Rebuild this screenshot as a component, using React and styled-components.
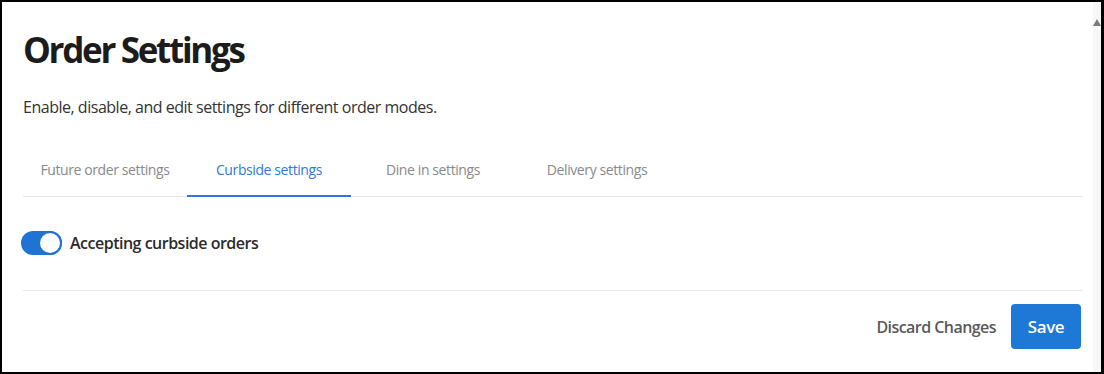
import React, { useState } from 'react'
import styled, { createGlobalStyle } from 'styled-components'

const GlobalStyle = createGlobalStyle`
  html, body {
    margin: 0;
    padding: 0;
    background: #fff;
  }
  body {
    font-family: 'Open Sans', 'Noto Sans', sans-serif;
    color: #222;
  }
`

const Frame = styled.div`
  display: flex;
  width: 1104px;
  height: 374px;
  box-sizing: border-box;
  border: 2px solid #000;
  border-right-width: 3px;
  overflow: hidden;
`

const Page = styled.main`
  flex: 1;
  display: flex;
  flex-direction: column;
  padding: 0 10px 0 21px;
`

const Scrollbar = styled.div`
  width: 8px;
  background: #f7f7f7;
  display: flex;
  justify-content: center;
  padding-top: 17px;
  box-sizing: border-box;
`

const ScrollArrow = styled.div`
  width: 0;
  height: 0;
  border-left: 4px solid transparent;
  border-right: 4px solid transparent;
  border-bottom: 7px solid #7a7a7a;
`

const Title = styled.h1`
  margin: 24px 0 0;
  font-size: 35px;
  line-height: 48px;
  font-weight: 700;
  color: #1c1c1c;
  letter-spacing: -2.3px;
`

const Subtitle = styled.p`
  margin: 22px 0 0;
  font-size: 16px;
  line-height: 22px;
  letter-spacing: -0.48px;
  color: #333;
`

const Tabs = styled.nav`
  display: flex;
  margin-top: 37px;
  border-bottom: 1px solid #e6e6e6;
`

const Tab = styled.button`
  width: 164px;
  height: 42px;
  padding: 0 0 12px;
  border: none;
  background: none;
  font-family: inherit;
  font-size: 14px;
  letter-spacing: -0.4px;
  color: ${p => (p.active ? '#2f7ad6' : '#8a8a8a')};
  border-bottom: 2px solid ${p => (p.active ? '#2f7ad6' : 'transparent')};
  margin-bottom: -1px;
  cursor: pointer;
`

const ToggleRow = styled.label`
  display: flex;
  align-items: center;
  gap: 8px;
  margin: 34px 0 0 -2px;
  font-size: 16px;
  font-weight: 600;
  letter-spacing: -0.5px;
  color: #2b2b2b;
`

const Switch = styled.span`
  position: relative;
  width: 41px;
  height: 24px;
  border-radius: 12px;
  background: ${p => (p.on ? '#1f73d2' : '#bbb')};
  flex-shrink: 0;

  &::after {
    content: '';
    position: absolute;
    top: 0;
    left: ${p => (p.on ? '17px' : '0')};
    width: 24px;
    height: 24px;
    box-sizing: border-box;
    border-radius: 50%;
    border: 2px solid ${p => (p.on ? '#1f73d2' : '#bbb')};
    background: #fff;
  }
`

const Divider = styled.hr`
  margin: 35px 0 0;
  border: none;
  border-top: 1px solid #e8e8e8;
`

const Footer = styled.footer`
  display: flex;
  justify-content: flex-end;
  align-items: center;
  gap: 15px;
  margin-top: 13px;
  padding-right: 2px;
`

const LinkButton = styled.button`
  border: none;
  background: none;
  padding: 0;
  font-family: inherit;
  font-size: 16px;
  font-weight: 600;
  letter-spacing: -0.55px;
  color: #5a5a5a;
  cursor: pointer;
`

const SaveButton = styled.button`
  width: 70px;
  height: 45px;
  border: none;
  border-radius: 4px;
  background: #1e78d6;
  color: #fff;
  font-family: inherit;
  font-size: 17px;
  font-weight: 600;
  letter-spacing: -0.4px;
  cursor: pointer;
`

const tabs = ['Future order settings', 'Curbside settings', 'Dine in settings', 'Delivery settings']

export default function App() {
  const [active, setActive] = useState(1)
  const [accepting, setAccepting] = useState(true)

  return (
    <>
      <GlobalStyle />
      <Frame>
        <Page>
          <Title>Order Settings</Title>
          <Subtitle>Enable, disable, and edit settings for different order modes.</Subtitle>
          <Tabs>
            {tabs.map((t, i) => (
              <Tab key={t} active={i === active} onClick={() => setActive(i)}>
                {t}
              </Tab>
            ))}
          </Tabs>
          <ToggleRow onClick={() => setAccepting(!accepting)}>
            <Switch on={accepting} />
            Accepting curbside orders
          </ToggleRow>
          <Divider />
          <Footer>
            <LinkButton>Discard Changes</LinkButton>
            <SaveButton>Save</SaveButton>
          </Footer>
        </Page>
        <Scrollbar>
          <ScrollArrow />
        </Scrollbar>
      </Frame>
    </>
  )
}
